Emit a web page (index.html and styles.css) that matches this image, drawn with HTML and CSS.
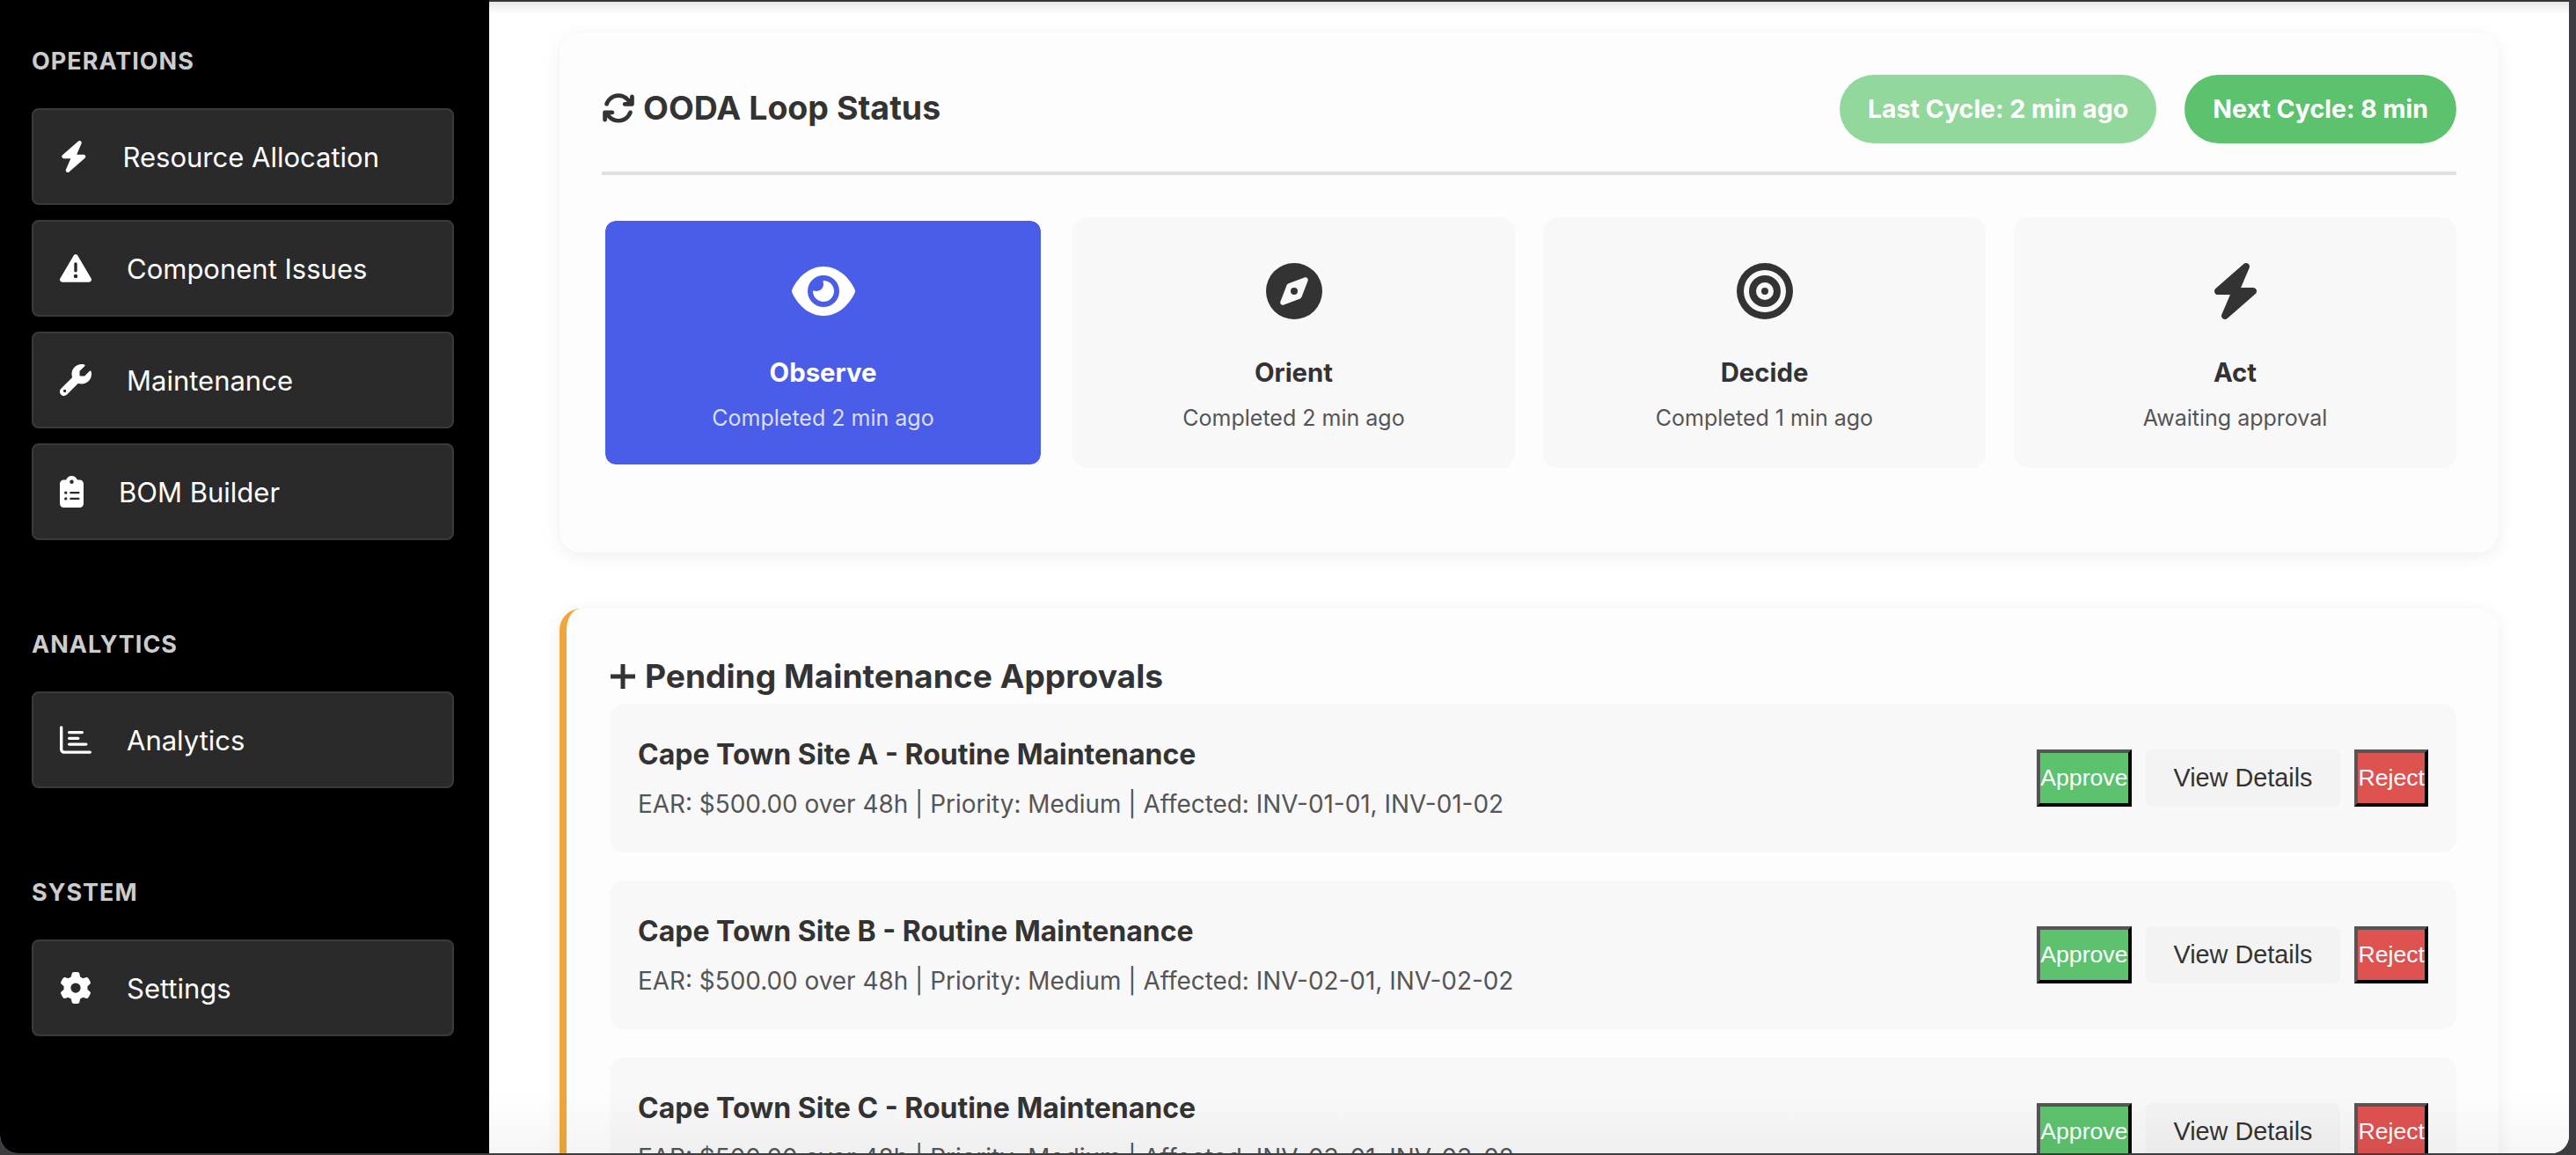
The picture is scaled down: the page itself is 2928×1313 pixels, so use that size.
FILE: index.html
```html
<!DOCTYPE html>
<html lang="en">
<head>
    <meta charset="UTF-8">
    <meta name="viewport" content="width=device-width, initial-scale=1.0">
    <title>OODA Loop Status</title>
    <link rel="stylesheet" href="styles.css">
</head>
<body>
    <svg class="icon-defs" xmlns="http://www.w3.org/2000/svg">
        <symbol id="i-bolt" viewBox="0 0 448 512"><path d="M349.4 44.6c5.9-13.7 1.5-29.7-10.6-38.5s-28.6-8-39.9 1.8l-256 224c-10 8.8-13.6 22.9-8.9 35.3S50.7 288 64 288H175.5L98.6 467.4c-5.9 13.7-1.5 29.7 10.6 38.5s28.6 8 39.9-1.8l256-224c10-8.8 13.6-22.9 8.9-35.3s-16.6-20.7-30-20.7H272.5L349.4 44.6z"/></symbol>
    </svg>

    <div class="window">
        <aside class="sidebar">
            <section class="nav-group">
                <h3 class="nav-label">OPERATIONS</h3>
                <div class="nav-list">
                    <a class="nav-btn"><svg class="nav-icon w-bolt" viewBox="0 0 448 512"><use href="#i-bolt"/></svg>Resource Allocation</a>
                    <a class="nav-btn"><svg class="nav-icon" viewBox="0 0 512 512"><path d="M256 32c14.2 0 27.3 7.5 34.5 19.8l216 368c7.3 12.4 7.3 27.7 .2 40.1S486.3 480 472 480H40c-14.3 0-27.6-7.7-34.7-20.1s-7-27.8 .2-40.1l216-368C228.7 39.5 241.8 32 256 32zm0 128c-13.3 0-24 10.7-24 24V296c0 13.3 10.7 24 24 24s24-10.7 24-24V184c0-13.3-10.7-24-24-24zm32 224a32 32 0 1 0 -64 0 32 32 0 1 0 64 0z"/></svg>Component Issues</a>
                    <a class="nav-btn"><svg class="nav-icon" viewBox="0 0 512 512"><path d="M352 320c88.4 0 160-71.6 160-160c0-15.3-2.2-30.1-6.2-44.2c-3.1-10.8-16.4-13.2-24.3-5.3l-76.8 76.8c-3 3-7.1 4.7-11.3 4.7H336c-8.8 0-16-7.2-16-16V118.6c0-4.2 1.7-8.3 4.7-11.3l76.8-76.8c7.9-7.9 5.4-21.2-5.3-24.3C382.1 2.2 367.3 0 352 0C263.6 0 192 71.6 192 160c0 19.1 3.4 37.5 9.5 54.5L19.9 396.1C7.2 408.8 0 426.1 0 444.1C0 481.6 30.4 512 67.9 512c18 0 35.3-7.2 48-19.9L297.5 310.5c17 6.2 35.4 9.5 54.5 9.5zM80 408a24 24 0 1 1 0 48 24 24 0 1 1 0-48z"/></svg>Maintenance</a>
                    <a class="nav-btn"><svg class="nav-icon w-clip" viewBox="0 0 384 512"><path d="M192 0c-41.8 0-77.4 26.7-90.5 64H64C28.7 64 0 92.7 0 128V448c0 35.3 28.7 64 64 64H320c35.3 0 64-28.7 64-64V128c0-35.3-28.7-64-64-64H282.5C269.4 26.7 233.8 0 192 0zm0 64a32 32 0 1 1 0 64 32 32 0 1 1 0-64zM72 272a24 24 0 1 1 48 0 24 24 0 1 1 -48 0zm104-16H304c8.8 0 16 7.2 16 16s-7.2 16-16 16H176c-8.8 0-16-7.2-16-16s7.2-16 16-16zM72 368a24 24 0 1 1 48 0 24 24 0 1 1 -48 0zm88 0c0-8.8 7.2-16 16-16H304c8.8 0 16 7.2 16 16s-7.2 16-16 16H176c-8.8 0-16-7.2-16-16z"/></svg>BOM Builder</a>
                </div>
            </section>
            <section class="nav-group">
                <h3 class="nav-label">ANALYTICS</h3>
                <div class="nav-list">
                    <a class="nav-btn"><svg class="nav-icon" viewBox="0 0 512 512"><path d="M24 32c13.3 0 24 10.7 24 24V408c0 13.3 10.7 24 24 24H488c13.3 0 24 10.7 24 24s-10.7 24-24 24H72c-39.8 0-72-32.2-72-72V56C0 42.7 10.7 32 24 32zM128 136c0-13.3 10.7-24 24-24l208 0c13.3 0 24 10.7 24 24s-10.7 24-24 24l-208 0c-13.3 0-24-10.7-24-24zm24 72H296c13.3 0 24 10.7 24 24s-10.7 24-24 24H152c-13.3 0-24-10.7-24-24s10.7-24 24-24zm0 96H424c13.3 0 24 10.7 24 24s-10.7 24-24 24H152c-13.3 0-24-10.7-24-24s10.7-24 24-24z"/></svg>Analytics</a>
                </div>
            </section>
            <section class="nav-group">
                <h3 class="nav-label">SYSTEM</h3>
                <div class="nav-list">
                    <a class="nav-btn"><svg class="nav-icon" viewBox="0 0 512 512"><path d="M495.9 166.6c3.2 8.7 .5 18.4-6.4 24.6l-43.3 39.4c1.1 8.3 1.7 16.8 1.7 25.4s-.6 17.1-1.7 25.4l43.3 39.4c6.9 6.2 9.6 15.9 6.4 24.6c-4.4 11.9-9.7 23.3-15.8 34.3l-4.7 8.1c-6.6 11-14 21.4-22.1 31.2c-5.9 7.2-15.7 9.6-24.5 6.8l-55.7-17.7c-13.4 10.3-28.2 18.9-44 25.4l-12.5 57.1c-2 9.1-9 16.3-18.2 17.8c-13.8 2.3-28 3.5-42.5 3.5s-28.7-1.2-42.5-3.5c-9.2-1.5-16.2-8.7-18.2-17.8l-12.5-57.1c-15.8-6.5-30.6-15.1-44-25.4L83.1 425.9c-8.8 2.8-18.6 .3-24.5-6.8c-8.1-9.8-15.5-20.2-22.1-31.2l-4.7-8.1c-6.1-11-11.4-22.4-15.8-34.3c-3.2-8.7-.5-18.4 6.4-24.6l43.3-39.4C64.6 273.1 64 264.6 64 256s.6-17.1 1.7-25.4L22.4 191.2c-6.9-6.2-9.6-15.9-6.4-24.6c4.4-11.9 9.7-23.3 15.8-34.3l4.7-8.1c6.6-11 14-21.4 22.1-31.2c5.9-7.2 15.7-9.6 24.5-6.8l55.7 17.7c13.4-10.3 28.2-18.9 44-25.4l12.5-57.1c2-9.1 9-16.3 18.2-17.8C227.3 1.2 241.5 0 256 0s28.7 1.2 42.5 3.5c9.2 1.5 16.2 8.7 18.2 17.8l12.5 57.1c15.8 6.5 30.6 15.1 44 25.4l55.7-17.7c8.8-2.8 18.6-.3 24.5 6.8c8.1 9.8 15.5 20.2 22.1 31.2l4.7 8.1c6.1 11 11.4 22.4 15.8 34.3zM256 336a80 80 0 1 0 0-160 80 80 0 1 0 0 160z"/></svg>Settings</a>
                </div>
            </section>
        </aside>

        <main class="main">
            <section class="card">
                <div class="card-header">
                    <h2 class="card-title"><svg class="title-icon" viewBox="0 0 512 512"><path d="M105.1 202.6c7.7-21.8 20.2-42.3 37.8-59.8c62.5-62.5 163.8-62.5 226.3 0L386.3 160H352c-17.7 0-32 14.3-32 32s14.3 32 32 32H463.5c0 0 0 0 0 0h.4c17.7 0 32-14.3 32-32V80c0-17.7-14.3-32-32-32s-32 14.3-32 32v35.2L414.4 97.6c-87.5-87.5-229.3-87.5-316.8 0C73.2 122 55.6 150.7 44.8 181.4c-5.9 16.7 2.9 34.9 19.5 40.8s34.9-2.9 40.8-19.5zM39 289.3c-5 1.5-9.8 4.2-13.7 8.2c-4 4-6.7 8.8-8.1 14c-.3 1.2-.6 2.5-.8 3.8c-.3 1.7-.4 3.4-.4 5.1V432c0 17.7 14.3 32 32 32s32-14.3 32-32V396.9l17.6 17.5 0 0c87.5 87.4 229.3 87.4 316.7 0c24.4-24.4 42.1-53.1 52.9-83.7c5.9-16.7-2.9-34.9-19.5-40.8s-34.9 2.9-40.8 19.5c-7.7 21.8-20.2 42.3-37.8 59.8c-62.5 62.5-163.8 62.5-226.3 0l-.1-.1L125.6 352H160c17.7 0 32-14.3 32-32s-14.3-32-32-32H48.4c-1.6 0-3.2 .1-4.8 .3s-3.1 .5-4.6 1z"/></svg>OODA Loop Status</h2>
                    <div class="badges">
                        <span class="badge badge-faded">Last Cycle: 2 min ago</span>
                        <span class="badge">Next Cycle: 8 min</span>
                    </div>
                </div>
                <div class="steps">
                    <div class="step step-active">
                        <svg class="step-icon" viewBox="0 0 576 512"><path d="M288 32c-80.8 0-145.5 36.8-192.6 80.6C48.6 156 17.3 208 2.5 243.7c-3.3 7.9-3.3 16.7 0 24.6C17.3 304 48.6 356 95.4 399.4C142.5 443.2 207.2 480 288 480s145.5-36.8 192.6-80.6c46.8-43.5 78.1-95.4 93-131.1c3.3-7.9 3.3-16.7 0-24.6c-14.9-35.7-46.2-87.7-93-131.1C433.5 68.8 368.8 32 288 32zM144 256a144 144 0 1 1 288 0 144 144 0 1 1 -288 0zm144-64c0 35.3-28.7 64-64 64c-7.1 0-13.9-1.2-20.3-3.3c-5.5-1.8-11.9 1.6-11.7 7.4c.3 6.9 1.3 13.8 3.2 20.7c13.7 51.2 66.4 81.6 117.6 67.9s81.6-66.4 67.9-117.6c-11.1-41.5-47.8-69.4-88.6-71.1c-5.8-.2-9.2 6.1-7.4 11.7c2.1 6.4 3.3 13.2 3.3 20.3z"/></svg>
                        <div class="step-name">Observe</div>
                        <div class="step-note">Completed 2 min ago</div>
                    </div>
                    <div class="step">
                        <svg class="step-icon" viewBox="0 0 512 512"><path d="M256 512A256 256 0 1 0 256 0a256 256 0 1 0 0 512zm50.7-186.9L162.4 380.6c-19.4 7.5-38.5-11.6-31-31l55.5-144.3c3.3-8.5 9.9-15.1 18.4-18.4l144.3-55.5c19.4-7.5 38.5 11.6 31 31L325.1 306.7c-3.2 8.5-9.9 15.1-18.4 18.4zM288 256a32 32 0 1 0 -64 0 32 32 0 1 0 64 0z"/></svg>
                        <div class="step-name">Orient</div>
                        <div class="step-note">Completed 2 min ago</div>
                    </div>
                    <div class="step">
                        <svg class="step-icon" viewBox="0 0 512 512"><path d="M448 256A192 192 0 1 0 64 256a192 192 0 1 0 384 0zM0 256a256 256 0 1 1 512 0A256 256 0 1 1 0 256zm256 80a80 80 0 1 0 0-160 80 80 0 1 0 0 160zm0-224a144 144 0 1 1 0 288 144 144 0 1 1 0-288zM224 256a32 32 0 1 1 64 0 32 32 0 1 1 -64 0z"/></svg>
                        <div class="step-name">Decide</div>
                        <div class="step-note">Completed 1 min ago</div>
                    </div>
                    <div class="step">
                        <svg class="step-icon" viewBox="0 0 448 512"><use href="#i-bolt"/></svg>
                        <div class="step-name">Act</div>
                        <div class="step-note">Awaiting approval</div>
                    </div>
                </div>
            </section>

            <section class="card card-pending">
                <h2 class="pending-title"><svg class="plus-icon" viewBox="0 0 30 30"><path d="M15 1v28M1 15h28"/></svg>Pending Maintenance Approvals</h2>
                <div class="approvals">
                    <div class="approval">
                        <div class="approval-info">
                            <div class="approval-name">Cape Town Site A - Routine Maintenance</div>
                            <div class="approval-meta">EAR: $500.00 over 48h | Priority: Medium | Affected: INV-01-01, INV-01-02</div>
                        </div>
                        <div class="approval-actions">
                            <button class="btn-raw btn-approve">Approve</button>
                            <button class="btn-details">View Details</button>
                            <button class="btn-raw btn-reject">Reject</button>
                        </div>
                    </div>
                    <div class="approval">
                        <div class="approval-info">
                            <div class="approval-name">Cape Town Site B - Routine Maintenance</div>
                            <div class="approval-meta">EAR: $500.00 over 48h | Priority: Medium | Affected: INV-02-01, INV-02-02</div>
                        </div>
                        <div class="approval-actions">
                            <button class="btn-raw btn-approve">Approve</button>
                            <button class="btn-details">View Details</button>
                            <button class="btn-raw btn-reject">Reject</button>
                        </div>
                    </div>
                    <div class="approval">
                        <div class="approval-info">
                            <div class="approval-name">Cape Town Site C - Routine Maintenance</div>
                            <div class="approval-meta">EAR: $500.00 over 48h | Priority: Medium | Affected: INV-03-01, INV-03-02</div>
                        </div>
                        <div class="approval-actions">
                            <button class="btn-raw btn-approve">Approve</button>
                            <button class="btn-details">View Details</button>
                            <button class="btn-raw btn-reject">Reject</button>
                        </div>
                    </div>
                </div>
            </section>
        </main>
    </div>
</body>
</html>
```

FILE: styles.css
```css
* { box-sizing: border-box; }
html, body { margin: 0; height: 100%; overflow: hidden; }
body {
    background: #3d3d41;
    font-family: "Inter", "Liberation Sans", sans-serif;
    color: #333;
}
.icon-defs { display: none; }
.window {
    display: flex;
    width: 2920px;
    height: 1311px;
    border-radius: 0 0 20px 20px;
    overflow: hidden;
    background: #fff;
}

/* sidebar */
.sidebar {
    flex: 0 0 556px;
    background: #000;
    padding: 47px 40px 0 36px;
}
.nav-group { margin-bottom: 96px; }
.nav-label {
    margin: 0 0 30px;
    font-size: 27px;
    line-height: 46px;
    font-weight: 700;
    letter-spacing: 1px;
    color: #ccc;
}
.nav-list { display: flex; flex-direction: column; gap: 17px; }
.nav-btn {
    display: flex;
    align-items: center;
    gap: 40px;
    height: 110px;
    padding: 0 30px;
    background: #2a2a2a;
    border: 2px solid #3a3a3a;
    border-radius: 8px;
    font-size: 31px;
    font-weight: 400;
    color: #fff;
}
.nav-icon { width: 36px; height: 36px; fill: #fff; flex: none; }
.w-bolt { width: 31.5px; }
.w-clip { width: 27px; }

/* main column */
.main {
    position: relative;
    flex: 1;
    border-top: 2px solid #333;
    padding: 35px 80px 0;
    overflow: hidden;
    background: #fff;
}
.main::after {
    content: "";
    position: absolute;
    inset: 0;
    pointer-events: none;
    background:
        linear-gradient(#e6e6e6, rgba(255,255,255,0) 14px),
        linear-gradient(to top, rgba(0,0,0,0.035), rgba(0,0,0,0) 70px);
}
.card {
    background: #fdfdfd;
    border-radius: 24px;
    padding: 48px;
    margin-bottom: 64px;
    box-shadow: 0 4px 20px rgba(0,0,0,0.07);
}
.card-header {
    display: flex;
    justify-content: space-between;
    align-items: center;
    padding-bottom: 32px;
    border-bottom: 4px solid #e0e0e0;
    margin-bottom: 48px;
}
.card-title {
    display: flex;
    align-items: center;
    gap: 9px;
    margin: 0;
    padding-bottom: 3px;
    font-size: 37.5px;
    font-weight: 700;
    color: #333;
}
.title-icon { width: 38px; height: 38px; fill: #333; }
.badges { display: flex; gap: 32px; }
.badge {
    height: 78px;
    line-height: 78px;
    padding: 0 32px;
    border-radius: 40px;
    background: #5dc26d;
    color: #fff;
    font-size: 28.5px;
    font-weight: 700;
}
.badge-faded { background: #92d79b; }

/* OODA steps */
.steps {
    display: grid;
    grid-template-columns: repeat(4, 1fr);
    gap: 32px;
    margin-bottom: 48px;
}
.step {
    height: 285px;
    padding-top: 52px;
    background: #f8f8f8;
    border-radius: 16px;
    text-align: center;
}
.step-icon { display: block; height: 64px; margin: 0 auto 37px; fill: #333; }
.step-name {
    font-size: 29.3px;
    line-height: 48px;
    font-weight: 700;
    margin-bottom: 4px;
    color: #333;
}
.step-note {
    font-size: 25px;
    line-height: 46px;
    color: #555;
}
/* active step sits 4px inside its column, text stays where it is */
.step-active {
    padding-top: 48px;
    background: #4a5de8;
    background-clip: padding-box;
    border: 4px solid #fdfdfd;
}
.step-active .step-icon { fill: #fff; }
.step-active .step-name { color: #fff; }
.step-active .step-note { color: #dbdffa; }

/* pending approvals */
.card-pending {
    border-left: 8px solid #f0a63c;
    padding-left: 49px;
}
.pending-title {
    display: flex;
    align-items: center;
    gap: 10px;
    height: 60px;
    margin: 0;
    padding-bottom: 3px;
    font-size: 37.2px;
    font-weight: 700;
    color: #333;
}
.plus-icon { width: 30px; height: 30px; fill: none; stroke: #333; stroke-width: 5; }
.approvals { display: flex; flex-direction: column; gap: 32px; }
.approval {
    display: flex;
    justify-content: space-between;
    align-items: center;
    padding: 32px;
    background: #f8f8f8;
    border-radius: 16px;
}
.approval-name {
    font-size: 32px;
    line-height: 51px;
    font-weight: 700;
    margin-bottom: 8px;
    color: #333;
}
.approval-meta {
    font-size: 27.9px;
    line-height: 46px;
    color: #555;
}
.approval-actions { display: flex; gap: 16px; }
.btn-raw {
    padding: 0;
    font-family: "Liberation Sans", Arial, sans-serif;
    font-size: 26.67px;
    color: #fff;
    border: 4px solid;
    border-color: #555 #000 #000 #555;
}
.btn-approve { background: #5dc26d; }
.btn-reject { background: #de5250; }
.btn-details {
    padding: 16px 32px;
    font-family: "Liberation Sans", Arial, sans-serif;
    font-size: 28.8px;
    line-height: 33px;
    color: #333;
    background: #f3f3f3;
    border: 0;
    border-radius: 8px;
}
```
